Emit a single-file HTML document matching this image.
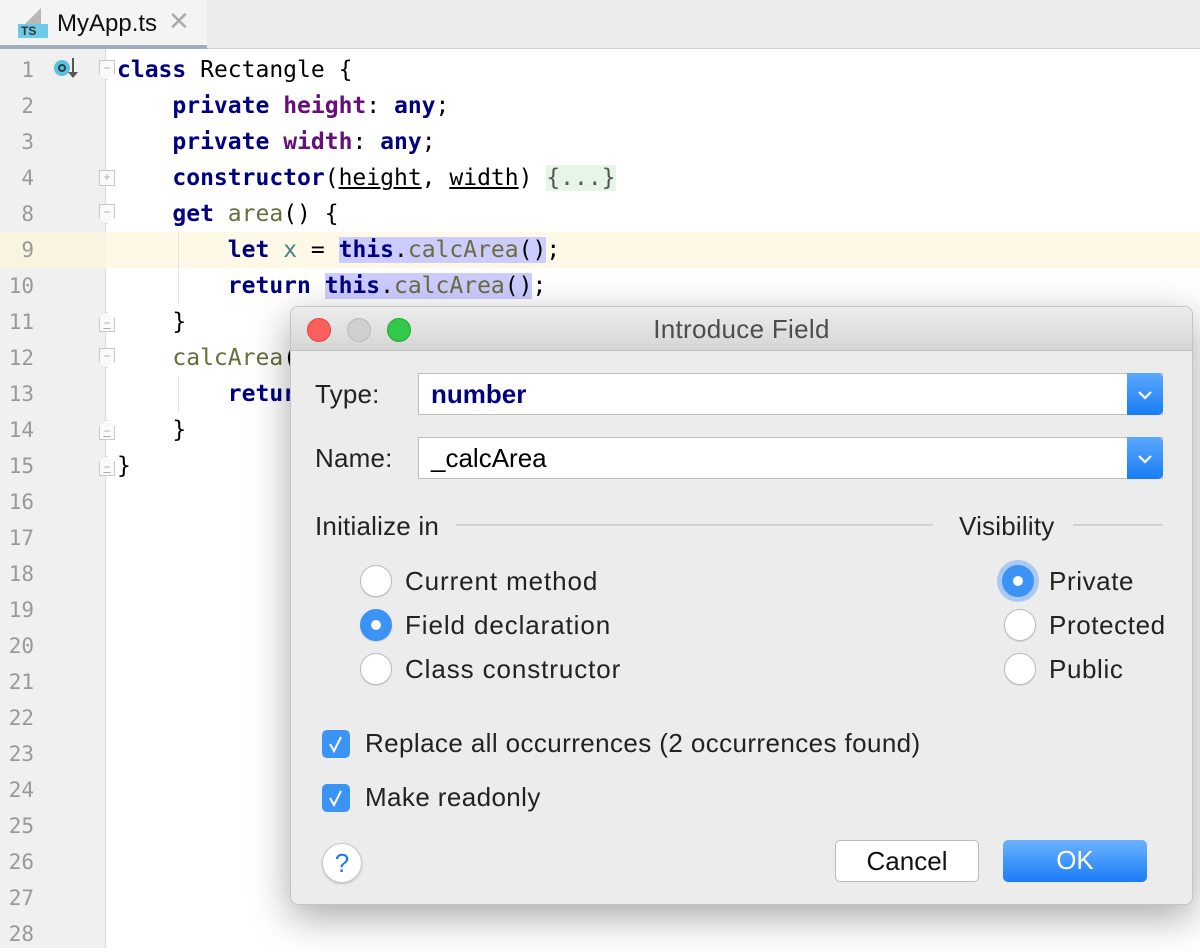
<!DOCTYPE html>
<html><head><meta charset="utf-8"><style>
*{margin:0;padding:0;box-sizing:border-box}
body{width:1200px;height:948px;overflow:hidden;background:#fff;position:relative;font-family:"Liberation Sans",sans-serif}
.tabbar{position:absolute;left:0;top:0;width:1200px;height:49px;background:#ececec;border-bottom:1px solid #d0d0d0}
.tab{position:absolute;left:0;top:0;width:207px;height:49px;background:#f4f4f4;border-bottom:4px solid #a2adbb}
.gutter{position:absolute;left:0;top:49px;width:106px;height:899px;background:#f0f0f0;border-right:1px solid #dcdcdc}
.ln{position:absolute;left:0;width:34px;text-align:right;font:21px "DejaVu Sans Mono",monospace;color:#999;height:36px;line-height:36px}
.code{position:absolute;left:117px;font:23px "DejaVu Sans Mono",monospace;white-space:pre;height:36px;line-height:36px;color:#000}
.k{color:#000080;font-weight:bold}.f{color:#660e7a;font-weight:bold}.m{color:#6b6b3e}.v{color:#458383}.u{text-decoration:underline}
.sel{background:#ccccff}
.fold{position:absolute;left:99px;width:16px;height:20px;border:1px solid #c8c8c8;background:#fafafa;font:12px monospace;color:#aaa;text-align:center;line-height:17px}
.fold.d{clip-path:polygon(0 0,100% 0,100% 70%,50% 100%,0 70%)}
.fold.u{clip-path:polygon(50% 0,100% 30%,100% 100%,0 100%,0 30%);line-height:22px}
.guide{position:absolute;left:178px;width:1px;background:#e4e4e4}
.dlg{position:absolute;left:290px;top:306px;width:903px;height:599px;background:#ececec;border:1px solid #c4c4c4;border-radius:8px;box-shadow:0 12px 40px rgba(0,0,0,.35);overflow:hidden}
.title{height:44px;background:linear-gradient(#ececec,#d6d6d6);border-bottom:1px solid #c0c0c0;text-align:center;font-size:26px;line-height:44px;color:#4d4d4d;letter-spacing:.3px}
.dot{position:absolute;top:11px;width:24px;height:24px;border-radius:50%}
.lbl{position:absolute;font-size:26px;color:#222;letter-spacing:.2px;white-space:nowrap}
.inp{position:absolute;left:127px;width:745px;height:42px;background:#fff;border:1px solid #bdbdbd;font-size:26px;line-height:40px;padding-left:12px}
.dd{position:absolute;right:-1px;top:-1px;width:36px;height:42px;background:linear-gradient(#5aa8ff,#1a7cf5);border-radius:0 5px 5px 0}
.rad{position:absolute;width:32px;height:32px;border-radius:50%;background:#fff;border:1px solid #bcbcbc;box-shadow:0 1px 1px rgba(0,0,0,.1)}
.rad.on{background:#3a93f5;border-color:#3a93f5}
.rad.on:after{content:"";position:absolute;left:10px;top:10px;width:10px;height:10px;border-radius:50%;background:#fff}
.chk{position:absolute;left:31px;width:28px;height:28px;border-radius:5px;background:#3a93f5}
.line{position:absolute;height:2px;background:#d2d2d2}
.btn{position:absolute;height:42px;border-radius:5px;font-size:26px;text-align:center;line-height:40px}
</style></head><body>
<div class="tabbar"><div class="tab">
<div style="position:absolute;left:18px;top:8px;width:30px;height:30px">
<div style="position:absolute;left:7px;top:0;width:16px;height:16px;background:#b8b8b8;clip-path:polygon(0 100%,100% 0,100% 100%)"></div>
<div style="position:absolute;left:0;top:16px;width:30px;height:14px;background:#6ecbe8;font:bold 12px 'Liberation Sans',sans-serif;color:#333;padding-left:3px;line-height:14px">TS</div></div>
<div style="position:absolute;left:57px;top:10px;font-size:24px;color:#111">MyApp.ts</div>
<div style="position:absolute;left:168px;top:6px;font-size:26px;color:#aaa">✕</div>
</div></div>
<div class="gutter"></div>
<div style="position:absolute;left:0;top:232px;width:1200px;height:36px;background:#fdf9e6"></div>
<div style="position:absolute;left:0;top:232px;width:106px;height:36px;background:#f8f4e0"></div>
<div class="guide" style="top:232px;height:72px"></div>
<div class="guide" style="top:376px;height:36px"></div>
<div style="position:absolute;left:54px;top:60px;width:16px;height:16px;border-radius:50%;background:#5fbfe0"><div style="position:absolute;left:4px;top:4px;width:8px;height:8px;border-radius:50%;border:2px solid #244"></div></div>
<div style="position:absolute;left:72px;top:58px;width:2px;height:16px;background:#555"></div>
<div style="position:absolute;left:68px;top:72px;border:5px solid transparent;border-top:6px solid #555"></div>
<div class="fold d" style="top:60px">−</div>
<div class="fold" style="top:170px;height:16px;line-height:14px">+</div>
<div class="fold d" style="top:204px">−</div>
<div class="fold u" style="top:312px">−</div>
<div class="fold d" style="top:348px">−</div>
<div class="fold u" style="top:420px">−</div>
<div class="fold u" style="top:456px">−</div>
<div id="lns"></div>
<div class="code" style="top:52px"><span class="k">class</span> Rectangle {</div>
<div class="code" style="top:88px">    <span class="k">private</span> <span class="f">height</span>: <span class="k">any</span>;</div>
<div class="code" style="top:124px">    <span class="k">private</span> <span class="f">width</span>: <span class="k">any</span>;</div>
<div class="code" style="top:160px">    <span class="k">constructor</span>(<span class="u">height</span>, <span class="u">width</span>) <span style="background:#e6f5e6;color:#555">{...}</span></div>
<div class="code" style="top:196px">    <span class="k">get</span> <span class="m">area</span>() {</div>
<div class="code" style="top:232px">        <span class="k">let</span> <span class="v">x</span> = <span class="sel"><span class="k">this</span>.<span class="m">calcArea</span>()</span>;</div>
<div class="code" style="top:268px">        <span class="k">return</span> <span class="sel"><span class="k">this</span>.<span class="m">calcArea</span>()</span>;</div>
<div class="code" style="top:304px">    }</div>
<div class="code" style="top:340px">    <span class="m">calcArea</span>(</div>
<div class="code" style="top:376px">        <span class="k">return</span></div>
<div class="code" style="top:412px">    }</div>
<div class="code" style="top:448px">}</div>
<div class="dlg">
<div class="title">Introduce Field</div>
<div class="dot" style="left:16px;background:#fc605c;border:1px solid #e0443e"></div>
<div class="dot" style="left:56px;background:#d0d0d0;border:1px solid #b8b8b8"></div>
<div class="dot" style="left:96px;background:#34c84a;border:1px solid #1aab29"></div>
<div class="lbl" style="left:24px;top:72px">Type:</div>
<div class="inp" style="top:66px;color:#000080;font-weight:bold">number<div class="dd"><svg width="36" height="42"><path d="M12 19l6 6 6-6" stroke="#fff" stroke-width="2.2" fill="none"/></svg></div></div>
<div class="lbl" style="left:24px;top:136px">Name:</div>
<div class="inp" style="top:130px">_calcArea<div class="dd"><svg width="36" height="42"><path d="M12 19l6 6 6-6" stroke="#fff" stroke-width="2.2" fill="none"/></svg></div></div>
<div class="lbl" style="left:24px;top:204px">Initialize in</div>
<div class="line" style="left:165px;width:477px;top:217px"></div>
<div class="lbl" style="left:668px;top:204px">Visibility</div>
<div class="line" style="left:782px;width:90px;top:217px"></div>
<div class="rad" style="left:69px;top:258px"></div><div class="lbl" style="left:114px;top:259px;letter-spacing:.9px">Current method</div>
<div class="rad on" style="left:69px;top:302px"></div><div class="lbl" style="left:114px;top:303px;letter-spacing:.9px">Field declaration</div>
<div class="rad" style="left:69px;top:346px"></div><div class="lbl" style="left:114px;top:347px;letter-spacing:.9px">Class constructor</div>
<div class="rad on" style="left:711px;top:258px;box-shadow:0 0 0 5px #a9c8f2"></div><div class="lbl" style="left:758px;top:259px;letter-spacing:.6px">Private</div>
<div class="rad" style="left:713px;top:302px"></div><div class="lbl" style="left:758px;top:303px;letter-spacing:.6px">Protected</div>
<div class="rad" style="left:713px;top:346px"></div><div class="lbl" style="left:758px;top:347px;letter-spacing:.6px">Public</div>
<div class="chk" style="top:423px"><svg width="28" height="28"><path d="M8 14l4 7 7-14" stroke="#fff" stroke-width="2" fill="none"/></svg></div>
<div class="lbl" style="left:74px;top:421px;letter-spacing:.4px">Replace all occurrences (2 occurrences found)</div>
<div class="chk" style="top:477px"><svg width="28" height="28"><path d="M8 14l4 7 7-14" stroke="#fff" stroke-width="2" fill="none"/></svg></div>
<div class="lbl" style="left:74px;top:475px;letter-spacing:.4px">Make readonly</div>
<div style="position:absolute;left:31px;top:536px;width:40px;height:40px;border-radius:50%;background:#fff;border:1px solid #c8c8c8;box-shadow:0 1px 2px rgba(0,0,0,.2);color:#1a7cf5;font-size:26px;text-align:center;line-height:38px">?</div>
<div class="btn" style="left:544px;top:533px;width:144px;background:#fff;border:1px solid #bcbcbc;color:#111">Cancel</div>
<div class="btn" style="left:712px;top:533px;width:144px;background:linear-gradient(#6cb3ff,#1a7cf5);color:#fff">OK</div>
</div>
<script>
var n=[1,2,3,4,8,9,10];for(var i=11;i<=28;i++)n.push(i);
var h='';n.forEach(function(v,k){h+='<div class="ln" style="top:'+(52+k*36)+'px">'+v+'</div>'});
document.getElementById('lns').innerHTML=h;
</script>
</body></html>
